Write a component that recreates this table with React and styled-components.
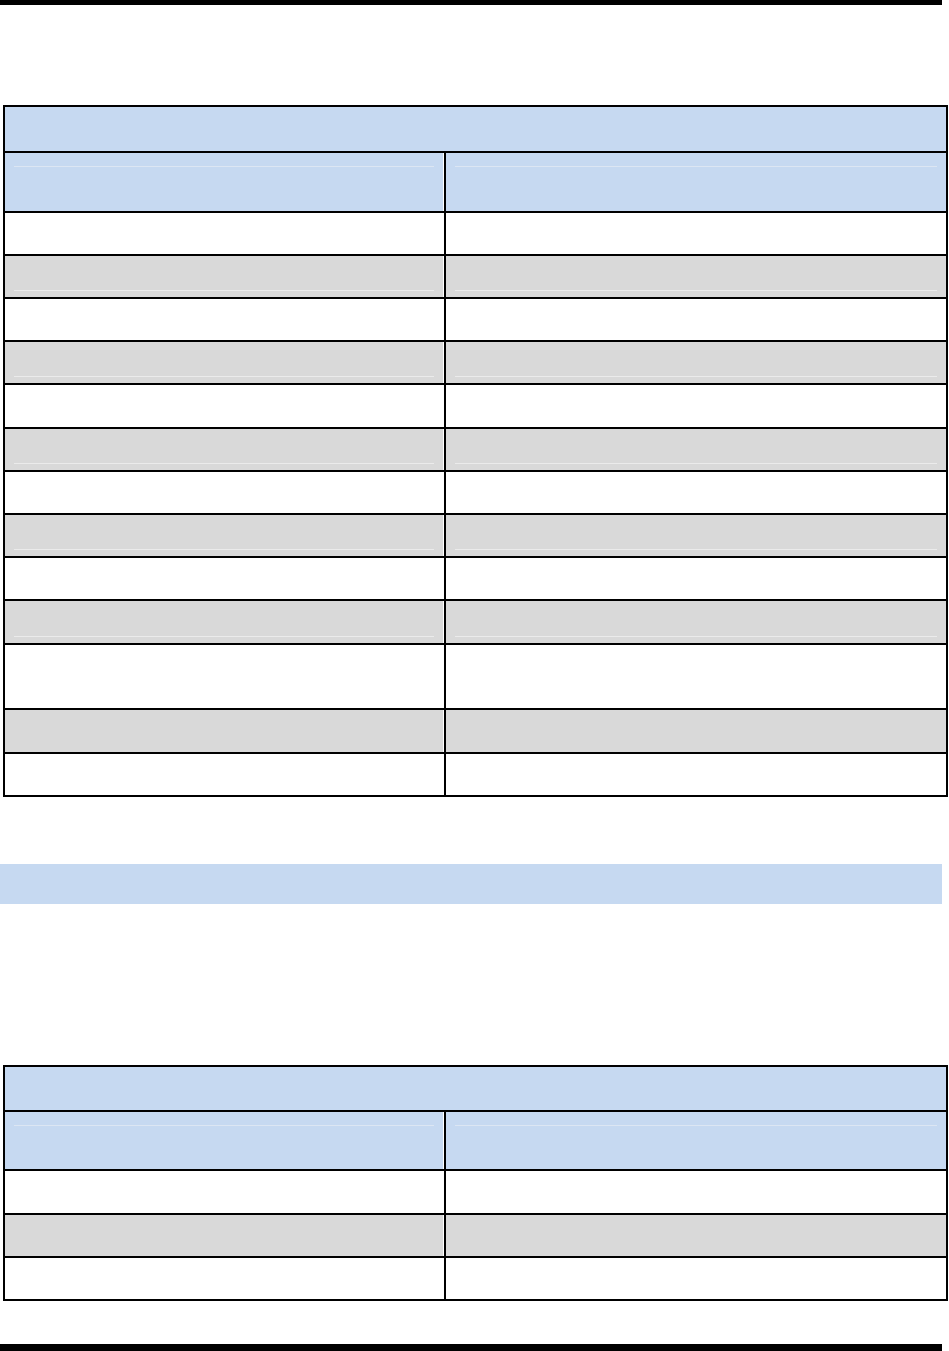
import React from "react";
import styled, { createGlobalStyle } from "styled-components";

const GlobalStyle = createGlobalStyle`
  html, body {
    margin: 0;
    padding: 0;
    background: #ffffff;
    font-family: "Liberation Sans", Arial, sans-serif;
  }
`;

// first table: row heights (each height includes the row's top border)
const firstRows = [
  { shade: false, h: 43 },
  { shade: true, h: 43, rule: true },
  { shade: false, h: 43 },
  { shade: true, h: 43, rule: true },
  { shade: false, h: 44 },
  { shade: true, h: 43, rule: true },
  { shade: false, h: 43 },
  { shade: true, h: 43, rule: true },
  { shade: false, h: 43 },
  { shade: true, h: 44, rule: true },
  { shade: false, h: 65 },
  { shade: true, h: 44 },
  { shade: false, h: 43 },
];

const secondRows = [
  { shade: false, h: 44 },
  { shade: true, h: 43 },
  { shade: false, h: 43 },
];

const DataTable = ({ titleHeight, headerHeight, rows }) => (
  <Table>
    <TitleRow $h={titleHeight} />
    <Row $h={headerHeight}>
      <HeaderCell $left>
        <Rule $tone="blue" />
      </HeaderCell>
      <HeaderCell>
        <Rule $tone="blue" />
      </HeaderCell>
    </Row>
    {rows.map((r, i) => (
      <Row key={i} $h={r.h}>
        <Cell $left $shade={r.shade}>
          {r.rule && <Rule $tone="gray" />}
        </Cell>
        <Cell $shade={r.shade}>{r.rule && <Rule $tone="gray" />}</Cell>
      </Row>
    ))}
  </Table>
);

const App = () => {
  return (
    <Page>
      <GlobalStyle />
      <PageRule $top />
      <DataTable titleHeight={44} headerHeight={60} rows={firstRows} />
      <Band />
      <SecondBlock>
        <DataTable titleHeight={43} headerHeight={59} rows={secondRows} />
      </SecondBlock>
      <PageRule />
    </Page>
  );
};

export default App;

// Styled Components
const Page = styled.div`
  width: 949px;
  height: 1351px;
  display: flex;
  flex-direction: column;
  overflow: hidden;
`;

const PageRule = styled.div`
  width: 942px;
  height: ${(p) => (p.$top ? "5px" : "7px")};
  background: #000000;
  flex-shrink: 0;
  margin-top: ${(p) => (p.$top ? "0" : "43px")};
  margin-bottom: ${(p) => (p.$top ? "100px" : "0")};
`;

const Table = styled.div`
  box-sizing: border-box;
  width: 945px;
  margin-left: 3px;
  border: 2px solid #000000;
  display: flex;
  flex-direction: column;
  flex-shrink: 0;
`;

const TitleRow = styled.div`
  height: ${(p) => p.$h}px;
  background: #c6d9f1;
`;

const Row = styled.div`
  box-sizing: border-box;
  height: ${(p) => p.$h}px;
  border-top: 2px solid #000000;
  display: grid;
  grid-template-columns: 441px 1fr;
`;

const Cell = styled.div`
  box-sizing: border-box;
  background: ${(p) => (p.$shade ? "#d9d9d9" : "#ffffff")};
  border-right: ${(p) => (p.$left ? "2px solid #000000" : "none")};
  box-shadow: ${(p) => (p.$left && p.$shade ? "inset -1px 0 0 #ffffff" : "none")};
  display: flex;
  flex-direction: column;
  justify-content: flex-end;
  padding: 0 ${(p) => (p.$left ? "10px" : "9px")} 6px 9px;
`;

const HeaderCell = styled(Cell)`
  background: #c6d9f1;
  box-shadow: ${(p) => (p.$left ? "inset -1px 0 0 #ffffff" : "none")};
  justify-content: flex-start;
  padding-top: 13px;
  padding-bottom: 0;
`;

const Rule = styled.div`
  height: 1px;
  background: ${(p) => (p.$tone === "blue" ? "#dce6f3" : "#ebebeb")};
`;

const Band = styled.div`
  width: 942px;
  height: 40px;
  margin-top: 67px;
  background: #c6d9f1;
  flex-shrink: 0;
`;

const SecondBlock = styled.div`
  margin-top: 161px;
`;
